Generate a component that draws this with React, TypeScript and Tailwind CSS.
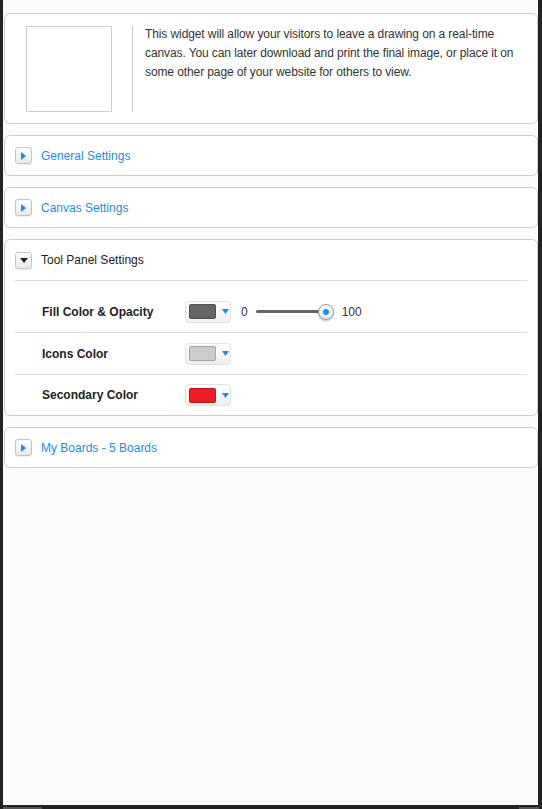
import React from 'react';

const FONT = { fontFamily: '"Liberation Sans", Arial, sans-serif' };

function Toggle({ open }: { open?: boolean }) {
  return (
    <span className="flex h-[17px] w-[17px] items-center justify-center rounded-[3px] border border-[#c4c4c4] bg-gradient-to-b from-white to-[#e9e9e9] shadow-[0_1px_1px_rgba(0,0,0,0.08)]">
      {open ? (
        <svg width="8" height="5" viewBox="0 0 8 5">
          <path d="M0 0h8L4 5z" fill="#222" />
        </svg>
      ) : (
        <svg width="5" height="8" viewBox="0 0 5 8">
          <path d="M0 0l5 4-5 4z" fill="#1a8cf0" />
        </svg>
      )}
    </span>
  );
}

function Section({ title }: { title: string }) {
  return (
    <div className="flex h-[41px] items-center gap-[9px] rounded-[6px] border border-[#cccccc] bg-white pl-[10px]">
      <Toggle />
      <span className="text-[12px] text-[#1a8cf0]">{title}</span>
    </div>
  );
}

function Picker({ color }: { color: string }) {
  return (
    <div className="flex h-[22px] w-[46px] items-center gap-[6px] rounded-[4px] border border-[#e2e2e2] bg-gradient-to-b from-white to-[#efefef] pl-[3px]">
      <span className="h-[15px] w-[27px] rounded-[2px] border border-black/20" style={{ backgroundColor: color }} />
      <svg width="7" height="5" viewBox="0 0 7 5">
        <path d="M0 0h7L3.5 5z" fill="#1a8cf0" />
      </svg>
    </div>
  );
}

const rows = [
  { label: 'Fill Color & Opacity', color: '#666666', slider: true },
  { label: 'Icons Color', color: '#cccccc' },
  { label: 'Secondary Color', color: '#ee1c25' },
];

export default function App() {
  return (
    <div className="flex h-[809px] w-[542px] flex-col bg-[#222222]" style={FONT}>
      <div className="ml-[3px] mr-[4px] flex flex-1 flex-col gap-[11px] bg-[#fcfcfc] pl-[1px] pt-[13px]">
        {/* intro card */}
        <div className="flex rounded-[6px] border border-[#cccccc] bg-white pb-[11px] pl-[21px] pt-[12px]">
          <div className="h-[86px] w-[86px] shrink-0 border border-[#cccccc]" />
          <div className="ml-[20px] w-px bg-[#cccccc]" />
          <p className="ml-[12px] mt-[-1px] whitespace-nowrap text-[12px] leading-[19px] tracking-[-0.1px] text-[#333333]">
            This widget will allow your visitors to leave a drawing on a real-time
            <br />
            canvas. You can later download and print the final image, or place it on
            <br />
            some other page of your website for others to view.
          </p>
        </div>

        <Section title="General Settings" />
        <Section title="Canvas Settings" />

        {/* tool panel settings, expanded */}
        <div className="rounded-[6px] border border-[#cccccc] bg-white">
          <div className="mx-[10px] flex h-[41px] items-center gap-[9px] border-b border-[#dddddd]">
            <Toggle open />
            <span className="text-[12px] text-[#222222]">Tool Panel Settings</span>
          </div>
          <div className="mx-[10px] pt-[10px]">
            {rows.map((r, i) => (
              <div
                key={r.label}
                className={
                  'flex items-center ' + (i < rows.length - 1 ? 'h-[42px] border-b border-[#dddddd]' : 'h-[40px]')
                }
              >
                <span className="w-[170px] pl-[27px] text-[12px] font-bold text-[#222222]">{r.label}</span>
                <Picker color={r.color} />
                {r.slider && (
                  <div className="ml-[10px] flex items-center text-[12px] text-[#333333]">
                    <span>0</span>
                    <div className="relative ml-[8px] h-[3px] w-[70px] rounded-full bg-[#666666]">
                      <span className="absolute right-[-8px] top-1/2 flex h-[16px] w-[16px] -translate-y-1/2 items-center justify-center rounded-full border border-[#999999] bg-gradient-to-b from-white to-[#e6e6e6] shadow-[0_1px_2px_rgba(0,0,0,0.3)]">
                        <span className="h-[6px] w-[6px] rounded-full bg-[#1a8cf0]" />
                      </span>
                    </div>
                    <span className="ml-[16px]">100</span>
                  </div>
                )}
              </div>
            ))}
          </div>
        </div>

        <Section title="My Boards - 5 Boards" />
      </div>
      {/* bottom scrollbar strip */}
      <div className="flex h-[4px] items-end px-[3px]">
        <div className="flex h-[2px] w-full justify-between">
          <span className="w-[39px] bg-[#555555]" />
          <span className="w-[20px] bg-[#555555]" />
        </div>
      </div>
    </div>
  );
}
